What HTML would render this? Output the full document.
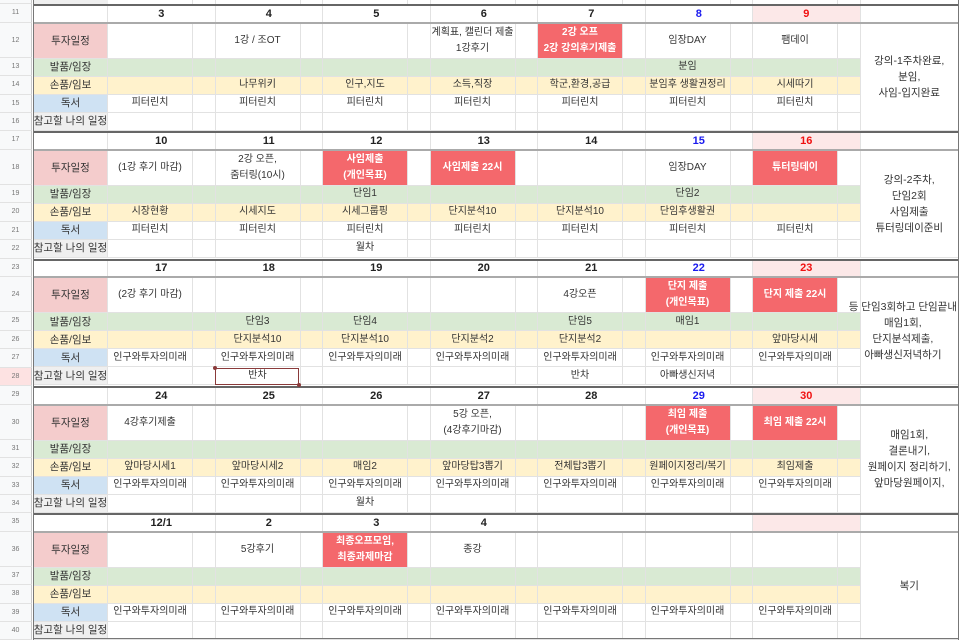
<!DOCTYPE html><html><head><meta charset="utf-8"><style>
body{margin:0;width:961px;height:640px;overflow:hidden;background:#fff;position:relative;font-family:"Liberation Sans","Noto Sans CJK KR",sans-serif}
table{border-collapse:collapse;table-layout:fixed;position:absolute;left:33px;width:925px}
td{border:1px solid #e2e2e2;padding:0;position:relative;font-size:10px;color:#333;text-align:center;overflow:visible}
td>span{position:absolute;left:50%;top:50%;transform:translate(-50%,-50%);white-space:nowrap;line-height:16px}
tr.h td{height:15.5px;font-weight:bold;font-size:11px;color:#222;border-top:2px solid #666;border-bottom:2px solid #aaa}
tr.t td{height:34px}
tr.o td{height:17px}
td.L{white-space:nowrap;font-size:10.5px}
.p{background:#f4cccc}.g{background:#d9ead3}.y{background:#fff2cc}.b{background:#cfe2f3}.e{background:#efefef}
.r{background:#f4686c;color:#fff;font-weight:bold}
.sa{color:#1a1aee!important}.su{color:#f01010!important;background:#fce8e8}
td.n{line-height:16px;font-size:10.5px}
.rn{position:absolute;left:0;width:32px;background:#f8f9fa;border-right:1px solid #c8c8c8;border-bottom:1px solid #e2e2e2;font-size:7px;color:#777;text-align:center;box-sizing:border-box;font-family:"Liberation Sans",sans-serif}
.sel{position:absolute;left:215px;top:368px;width:84px;height:17px;border:1px solid #8a3a3a;box-sizing:border-box}
.dot{position:absolute;width:4px;height:4px;border-radius:2px;background:#8a3a3a}
.vl{position:absolute;top:0;width:1px;height:4px;background:#e2e2e2}
</style></head><body>
<div class="rn" style="top:0;height:4px"></div>
<div style="position:absolute;left:33px;top:0;width:74px;height:4px;background:#efefef;border-left:1px solid #777"></div>
<div class="vl" style="left:192px"></div><div class="vl" style="left:215px"></div><div class="vl" style="left:300px"></div><div class="vl" style="left:322px"></div><div class="vl" style="left:407px"></div><div class="vl" style="left:430px"></div><div class="vl" style="left:515px"></div><div class="vl" style="left:537px"></div><div class="vl" style="left:622px"></div><div class="vl" style="left:645px"></div><div class="vl" style="left:730px"></div><div class="vl" style="left:752px"></div><div class="vl" style="left:837px"></div><div class="vl" style="left:860px"></div><div class="vl" style="left:958px;background:#777"></div>

<div class="rn" style="top:4px;height:18.5px;line-height:18px">11</div>
<div class="rn" style="top:22.5px;height:35px;line-height:35px">12</div>
<div class="rn" style="top:57.5px;height:18.5px;line-height:18px">13</div>
<div class="rn" style="top:76px;height:18.5px;line-height:18px">14</div>
<div class="rn" style="top:94.5px;height:18.5px;line-height:18px">15</div>
<div class="rn" style="top:113px;height:18.3px;line-height:18px">16</div>
<div class="rn" style="top:131.3px;height:18.5px;line-height:18px">17</div>
<div class="rn" style="top:149.8px;height:35px;line-height:35px">18</div>
<div class="rn" style="top:184.8px;height:18.5px;line-height:18px">19</div>
<div class="rn" style="top:203.3px;height:18.5px;line-height:18px">20</div>
<div class="rn" style="top:221.8px;height:18.5px;line-height:18px">21</div>
<div class="rn" style="top:240.3px;height:18.3px;line-height:18px">22</div>
<div class="rn" style="top:258.6px;height:18.5px;line-height:18px">23</div>
<div class="rn" style="top:277.1px;height:35px;line-height:35px">24</div>
<div class="rn" style="top:312.1px;height:18.5px;line-height:18px">25</div>
<div class="rn" style="top:330.6px;height:18.5px;line-height:18px">26</div>
<div class="rn" style="top:349.1px;height:18.5px;line-height:18px">27</div>
<div class="rn" style="top:367.6px;height:18.4px;line-height:18px;background:#fde2e2">28</div>
<div class="rn" style="top:386px;height:18.5px;line-height:18px">29</div>
<div class="rn" style="top:404.5px;height:35px;line-height:35px">30</div>
<div class="rn" style="top:439.5px;height:18.5px;line-height:18px">31</div>
<div class="rn" style="top:458px;height:18.5px;line-height:18px">32</div>
<div class="rn" style="top:476.5px;height:18.5px;line-height:18px">33</div>
<div class="rn" style="top:495px;height:18.3px;line-height:18px">34</div>
<div class="rn" style="top:513.3px;height:18.5px;line-height:18px">35</div>
<div class="rn" style="top:531.8px;height:35px;line-height:35px">36</div>
<div class="rn" style="top:566.8px;height:18.5px;line-height:18px">37</div>
<div class="rn" style="top:585.3px;height:18.5px;line-height:18px">38</div>
<div class="rn" style="top:603.8px;height:18.5px;line-height:18px">39</div>
<div class="rn" style="top:622.3px;height:18px;line-height:18px">40</div>

<table style="top:4px"><colgroup><col style="width:74px"><col style="width:85px"><col style="width:22.5px"><col style="width:85px"><col style="width:22.5px"><col style="width:85px"><col style="width:22.5px"><col style="width:85px"><col style="width:22.5px"><col style="width:85px"><col style="width:22.5px"><col style="width:85px"><col style="width:22.5px"><col style="width:85px"><col style="width:22.5px"><col style="width:98.5px"></colgroup>
<tr class="h"><td></td><td colspan="2"><span>3</span></td><td colspan="2"><span>4</span></td><td colspan="2"><span>5</span></td><td colspan="2"><span>6</span></td><td colspan="2"><span>7</span></td><td colspan="2" class="sa"><span>8</span></td><td colspan="2" class="su"><span>9</span></td><td></td></tr>
<tr class="t"><td class="L p"><span>투자일정</span></td><td></td><td></td><td><span>1강 / 조OT</span></td><td></td><td></td><td></td><td><span>계획표, 캘린더 제출<br>1강후기</span></td><td></td><td class="r"><span>2강 오프<br>2강 강의후기제출</span></td><td></td><td><span>임장DAY</span></td><td></td><td><span>팸데이</span></td><td></td><td class="n" rowspan="5"><span>강의-1주차완료,<br>분임,<br>사임-입지완료</span></td></tr>
<tr class="o g"><td class="L"><span>발품/임장</span></td><td></td><td></td><td></td><td></td><td></td><td></td><td></td><td></td><td></td><td></td><td><span>분임</span></td><td></td><td></td><td></td></tr>
<tr class="o y"><td class="L"><span>손품/임보</span></td><td></td><td></td><td><span>나무위키</span></td><td></td><td><span>인구,지도</span></td><td></td><td><span>소득,직장</span></td><td></td><td><span>학군,환경,공급</span></td><td></td><td><span>분임후 생활권정리</span></td><td></td><td><span>시세따기</span></td><td></td></tr>
<tr class="o"><td class="L b"><span>독서</span></td><td><span>피터린치</span></td><td></td><td><span>피터린치</span></td><td></td><td><span>피터린치</span></td><td></td><td><span>피터린치</span></td><td></td><td><span>피터린치</span></td><td></td><td><span>피터린치</span></td><td></td><td><span>피터린치</span></td><td></td></tr>
<tr class="o"><td class="L e"><span>참고할 나의 일정</span></td><td></td><td></td><td></td><td></td><td></td><td></td><td></td><td></td><td></td><td></td><td></td><td></td><td></td><td></td></tr>
</table>

<table style="top:131.3px"><colgroup><col style="width:74px"><col style="width:85px"><col style="width:22.5px"><col style="width:85px"><col style="width:22.5px"><col style="width:85px"><col style="width:22.5px"><col style="width:85px"><col style="width:22.5px"><col style="width:85px"><col style="width:22.5px"><col style="width:85px"><col style="width:22.5px"><col style="width:85px"><col style="width:22.5px"><col style="width:98.5px"></colgroup>
<tr class="h"><td></td><td colspan="2"><span>10</span></td><td colspan="2"><span>11</span></td><td colspan="2"><span>12</span></td><td colspan="2"><span>13</span></td><td colspan="2"><span>14</span></td><td colspan="2" class="sa"><span>15</span></td><td colspan="2" class="su"><span>16</span></td><td></td></tr>
<tr class="t"><td class="L p"><span>투자일정</span></td><td><span>(1강 후기 마감)</span></td><td></td><td><span>2강 오픈,<br>줌터링(10시)</span></td><td></td><td class="r"><span>사임제출<br>(개인목표)</span></td><td></td><td class="r"><span>사임제출 22시</span></td><td></td><td></td><td></td><td><span>임장DAY</span></td><td></td><td class="r"><span>튜터링데이</span></td><td></td><td class="n" rowspan="5"><span>강의-2주차,<br>단임2회<br>사임제출<br>튜터링데이준비</span></td></tr>
<tr class="o g"><td class="L"><span>발품/임장</span></td><td></td><td></td><td></td><td></td><td><span>단임1</span></td><td></td><td></td><td></td><td></td><td></td><td><span>단임2</span></td><td></td><td></td><td></td></tr>
<tr class="o y"><td class="L"><span>손품/임보</span></td><td><span>시장현황</span></td><td></td><td><span>시세지도</span></td><td></td><td><span>시세그룹핑</span></td><td></td><td><span>단지분석10</span></td><td></td><td><span>단지분석10</span></td><td></td><td><span>단임후생활권</span></td><td></td><td></td><td></td></tr>
<tr class="o"><td class="L b"><span>독서</span></td><td><span>피터린치</span></td><td></td><td><span>피터린치</span></td><td></td><td><span>피터린치</span></td><td></td><td><span>피터린치</span></td><td></td><td><span>피터린치</span></td><td></td><td><span>피터린치</span></td><td></td><td><span>피터린치</span></td><td></td></tr>
<tr class="o"><td class="L e"><span>참고할 나의 일정</span></td><td></td><td></td><td></td><td></td><td><span>월차</span></td><td></td><td></td><td></td><td></td><td></td><td></td><td></td><td></td><td></td></tr>
</table>

<table style="top:258.6px"><colgroup><col style="width:74px"><col style="width:85px"><col style="width:22.5px"><col style="width:85px"><col style="width:22.5px"><col style="width:85px"><col style="width:22.5px"><col style="width:85px"><col style="width:22.5px"><col style="width:85px"><col style="width:22.5px"><col style="width:85px"><col style="width:22.5px"><col style="width:85px"><col style="width:22.5px"><col style="width:98.5px"></colgroup>
<tr class="h"><td></td><td colspan="2"><span>17</span></td><td colspan="2"><span>18</span></td><td colspan="2"><span>19</span></td><td colspan="2"><span>20</span></td><td colspan="2"><span>21</span></td><td colspan="2" class="sa"><span>22</span></td><td colspan="2" class="su"><span>23</span></td><td></td></tr>
<tr class="t"><td class="L p"><span>투자일정</span></td><td><span>(2강 후기 마감)</span></td><td></td><td></td><td></td><td></td><td></td><td></td><td></td><td><span>4강오픈</span></td><td></td><td class="r"><span>단지 제출<br>(개인목표)</span></td><td></td><td class="r"><span>단지 제출 22시</span></td><td></td><td class="n" rowspan="5"><span style="left:auto;right:1px;transform:translateY(-50%);text-align:center">등 단임3회하고 단임끝내<br>매임1회,<br>단지분석제출,<br>아빠생신저녁하기</span></td></tr>
<tr class="o g"><td class="L"><span>발품/임장</span></td><td></td><td></td><td><span>단임3</span></td><td></td><td><span>단임4</span></td><td></td><td></td><td></td><td><span>단임5</span></td><td></td><td><span>매임1</span></td><td></td><td></td><td></td></tr>
<tr class="o y"><td class="L"><span>손품/임보</span></td><td></td><td></td><td><span>단지분석10</span></td><td></td><td><span>단지분석10</span></td><td></td><td><span>단지분석2</span></td><td></td><td><span>단지분석2</span></td><td></td><td></td><td></td><td><span>앞마당시세</span></td><td></td></tr>
<tr class="o"><td class="L b"><span>독서</span></td><td><span>인구와투자의미래</span></td><td></td><td><span>인구와투자의미래</span></td><td></td><td><span>인구와투자의미래</span></td><td></td><td><span>인구와투자의미래</span></td><td></td><td><span>인구와투자의미래</span></td><td></td><td><span>인구와투자의미래</span></td><td></td><td><span>인구와투자의미래</span></td><td></td></tr>
<tr class="o"><td class="L e"><span>참고할 나의 일정</span></td><td></td><td></td><td><span>반차</span></td><td></td><td></td><td></td><td></td><td></td><td><span>반차</span></td><td></td><td><span>아빠생신저녁</span></td><td></td><td></td><td></td></tr>
</table>

<table style="top:386px"><colgroup><col style="width:74px"><col style="width:85px"><col style="width:22.5px"><col style="width:85px"><col style="width:22.5px"><col style="width:85px"><col style="width:22.5px"><col style="width:85px"><col style="width:22.5px"><col style="width:85px"><col style="width:22.5px"><col style="width:85px"><col style="width:22.5px"><col style="width:85px"><col style="width:22.5px"><col style="width:98.5px"></colgroup>
<tr class="h"><td></td><td colspan="2"><span>24</span></td><td colspan="2"><span>25</span></td><td colspan="2"><span>26</span></td><td colspan="2"><span>27</span></td><td colspan="2"><span>28</span></td><td colspan="2" class="sa"><span>29</span></td><td colspan="2" class="su"><span>30</span></td><td></td></tr>
<tr class="t"><td class="L p"><span>투자일정</span></td><td><span>4강후기제출</span></td><td></td><td></td><td></td><td></td><td></td><td><span>5강 오픈,<br>(4강후기마감)</span></td><td></td><td></td><td></td><td class="r"><span>최임 제출<br>(개인목표)</span></td><td></td><td class="r"><span>최임 제출 22시</span></td><td></td><td class="n" rowspan="5"><span>매임1회,<br>결론내기,<br>원페이지 정리하기,<br>앞마당원페이지,</span></td></tr>
<tr class="o g"><td class="L"><span>발품/임장</span></td><td></td><td></td><td></td><td></td><td></td><td></td><td></td><td></td><td></td><td></td><td></td><td></td><td></td><td></td></tr>
<tr class="o y"><td class="L"><span>손품/임보</span></td><td><span>앞마당시세1</span></td><td></td><td><span>앞마당시세2</span></td><td></td><td><span>매임2</span></td><td></td><td><span>앞마당탑3뽑기</span></td><td></td><td><span>전체탑3뽑기</span></td><td></td><td><span>원페이지정리/복기</span></td><td></td><td><span>최임제출</span></td><td></td></tr>
<tr class="o"><td class="L b"><span>독서</span></td><td><span>인구와투자의미래</span></td><td></td><td><span>인구와투자의미래</span></td><td></td><td><span>인구와투자의미래</span></td><td></td><td><span>인구와투자의미래</span></td><td></td><td><span>인구와투자의미래</span></td><td></td><td><span>인구와투자의미래</span></td><td></td><td><span>인구와투자의미래</span></td><td></td></tr>
<tr class="o"><td class="L e"><span>참고할 나의 일정</span></td><td></td><td></td><td></td><td></td><td><span>월차</span></td><td></td><td></td><td></td><td></td><td></td><td></td><td></td><td></td><td></td></tr>
</table>

<table style="top:513.3px"><colgroup><col style="width:74px"><col style="width:85px"><col style="width:22.5px"><col style="width:85px"><col style="width:22.5px"><col style="width:85px"><col style="width:22.5px"><col style="width:85px"><col style="width:22.5px"><col style="width:85px"><col style="width:22.5px"><col style="width:85px"><col style="width:22.5px"><col style="width:85px"><col style="width:22.5px"><col style="width:98.5px"></colgroup>
<tr class="h"><td></td><td colspan="2"><span>12/1</span></td><td colspan="2"><span>2</span></td><td colspan="2"><span>3</span></td><td colspan="2"><span>4</span></td><td colspan="2"></td><td colspan="2"></td><td colspan="2" class="su"></td><td></td></tr>
<tr class="t"><td class="L p"><span>투자일정</span></td><td></td><td></td><td><span>5강후기</span></td><td></td><td class="r"><span>최종오프모임,<br>최종과제마감</span></td><td></td><td><span>종강</span></td><td></td><td></td><td></td><td></td><td></td><td></td><td></td><td class="n" rowspan="5"><span>복기</span></td></tr>
<tr class="o g"><td class="L"><span>발품/임장</span></td><td></td><td></td><td></td><td></td><td></td><td></td><td></td><td></td><td></td><td></td><td></td><td></td><td></td><td></td></tr>
<tr class="o y"><td class="L"><span>손품/임보</span></td><td></td><td></td><td></td><td></td><td></td><td></td><td></td><td></td><td></td><td></td><td></td><td></td><td></td><td></td></tr>
<tr class="o"><td class="L b"><span>독서</span></td><td><span>인구와투자의미래</span></td><td></td><td><span>인구와투자의미래</span></td><td></td><td><span>인구와투자의미래</span></td><td></td><td><span>인구와투자의미래</span></td><td></td><td><span>인구와투자의미래</span></td><td></td><td><span>인구와투자의미래</span></td><td></td><td><span>인구와투자의미래</span></td><td></td></tr>
<tr class="o"><td class="L e"><span>참고할 나의 일정</span></td><td></td><td></td><td></td><td></td><td></td><td></td><td></td><td></td><td></td><td></td><td></td><td></td><td></td><td></td></tr>
</table>

<div style="position:absolute;left:33px;top:0;width:1px;height:640px;background:#777"></div>
<div style="position:absolute;left:958px;top:0;width:1px;height:640px;background:#777"></div>
<div style="position:absolute;left:33px;top:638px;width:926px;height:1px;background:#777"></div>
<div class="sel"></div>
<div class="dot" style="left:213px;top:366px"></div>
<div class="dot" style="left:297px;top:383px"></div>
</body></html>
